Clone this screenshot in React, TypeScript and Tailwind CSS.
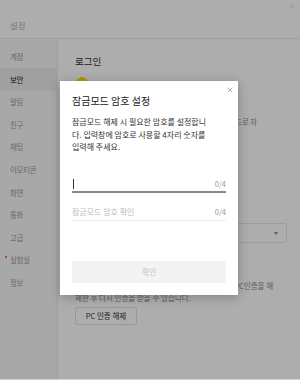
import React from "react";

const menu = ["계정", "보안", "알림", "친구", "채팅", "이모티콘", "화면", "통화", "고급", "실험실", "정보"];

function XIcon({ className, color }: { className: string; color: string }) {
  return (
    <svg className={className} viewBox="0 0 10 10" fill="none">
      <path d="M1 1L9 9M9 1L1 9" stroke={color} strokeWidth="1.1" />
    </svg>
  );
}

export default function App() {
  return (
    <div className="relative w-[300px] h-[380px] overflow-hidden bg-white font-['Noto_Sans_CJK_KR',sans-serif] border-b border-[#d0d0d0]">
      {/* header */}
      <div className="h-[39px] border-b border-[#e8e8e8] flex items-start justify-between">
        <div className="pl-[10px] pt-[19px] text-[8.5px] leading-[12px] text-[#b0b0b0]">설정</div>
        <XIcon className="w-[5px] h-[5px] mt-[4px] mr-[5px]" color="#c4c4c4" />
      </div>
      <div className="flex h-[340px]">
        {/* sidebar */}
        <div className="w-[58px] shrink-0 bg-[#f8f8f8] border-r border-[#e8e8e8] pt-[6.4px] flex flex-col">
          {menu.map((m) => (
            <div
              key={m}
              className={
                "relative h-[22.6px] flex items-center pl-[10px] text-[7.5px] leading-none tracking-[-0.3px] " +
                (m === "보안" ? "bg-[#ececec] text-[#111]" : "text-[#9a9a9a]")
              }
            >
              {m === "실험실" && (
                <span className="absolute left-[4.5px] top-[7px] w-[2.5px] h-[2.5px] rounded-full bg-[#e0423a]" />
              )}
              {m}
            </div>
          ))}
        </div>
        {/* main */}
        <div className="flex-1 pl-[17px] pt-[16px] flex flex-col">
          <div className="text-[9.5px] leading-[13px] text-[#333]">로그인</div>
          <div className="mt-[9px] ml-[1px] w-[12px] h-[12px] rounded-full bg-[#fee500]" />
          <div className="mt-[27px] text-[7.5px] leading-[12px] text-[#8a8a8a] whitespace-nowrap">
            <div className="tracking-[-0.2px]">PC 카카오톡을 일정 시간 동안 사용하지 않으면 잠금모드로 자</div>
            <div>동 전환됩니다. 잠금모드 해제 시 암호를 입력하세요.</div>
          </div>
          <div className="mt-[83px] w-[212px] h-[20px] border border-[#e8e8e8] rounded-[2px] flex items-center justify-end pr-[8px]">
            <svg className="w-[4px] h-[3px]" viewBox="0 0 4 3">
              <path d="M0 0H4L2 3Z" fill="#8a8a8a" />
            </svg>
          </div>
          <div className="mt-[37px] text-[7.5px] leading-[12px] text-[#8a8a8a] whitespace-nowrap">
            <div>다른 PC에서 로그인하려면 먼저 현재 기기의 등록된 PC인증을 해</div>
            <div>제한 후 다시 인증을 받을 수 있습니다.</div>
          </div>
          <div className="mt-[3px] w-[62px] h-[18px] border border-[#e0e0e0] rounded-[2px] flex items-center justify-center text-[7.5px] text-[#333]">
            PC 인증 해제
          </div>
        </div>
      </div>

      {/* dim overlay */}
      <div className="absolute inset-0 bg-black/[0.32]" />

      {/* modal */}
      <div className="absolute left-[60px] top-[81px] w-[178px] h-[214px] bg-white shadow-[0_2px_10px_rgba(0,0,0,0.25)] px-[12px] pt-[13px] flex flex-col">
        <XIcon className="absolute top-[6px] right-[5px] w-[6px] h-[6px]" color="#8a8a8a" />
        <div className="text-[10px] leading-[14px] text-[#1a1a1a]">잠금모드 암호 설정</div>
        <div className="mt-[8px] text-[8px] leading-[12.5px] text-[#333] whitespace-nowrap">
          <div>잠금모드 해제 시 필요한 암호를 설정합니</div>
          <div>다. 입력창에 암호로 사용할 4자리 숫자를</div>
          <div>입력해 주세요.</div>
        </div>
        <div className="mt-[22.5px] h-[17px] border-b-2 border-[#8a8a8a] flex items-center justify-between">
          <div className="ml-[1px] w-px h-[10px] bg-[#333]" />
          <div className="text-[7.5px] leading-none text-[#9a9a9a]">0/4</div>
        </div>
        <div className="mt-[10px] h-[18px] border-b border-[#ececec] flex items-center justify-between">
          <div className="text-[8px] leading-none text-[#bdbdbd]">잠금모드 암호 확인</div>
          <div className="text-[7.5px] leading-none text-[#9a9a9a]">0/4</div>
        </div>
        <div className="mt-[40px] h-[22px] rounded-[2px] bg-[#f3f3f3] flex items-center justify-center text-[8px] text-[#c6c6c6]">
          확인
        </div>
      </div>
    </div>
  );
}
